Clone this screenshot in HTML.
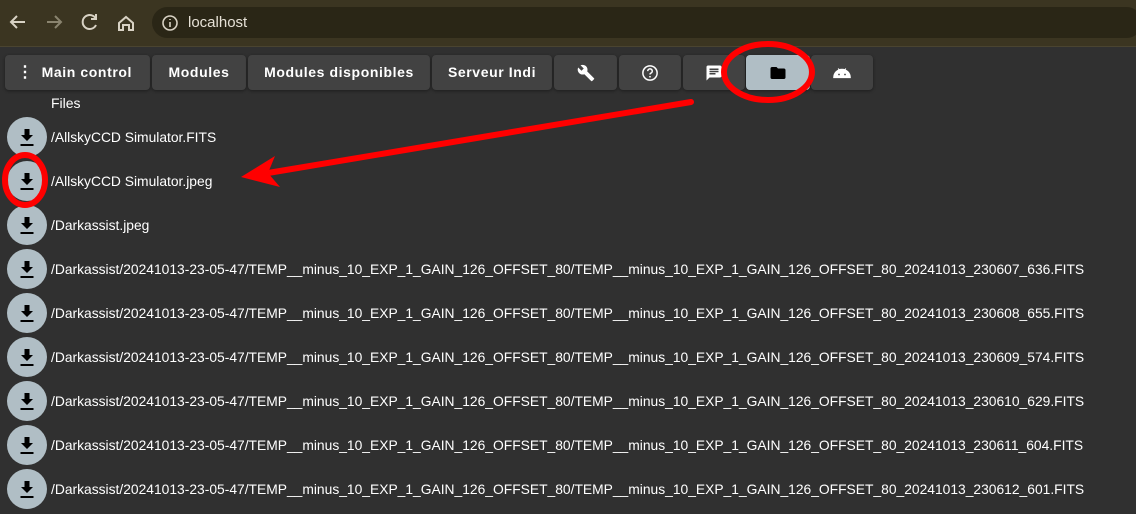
<!DOCTYPE html>
<html><head><style>
body{margin:0;width:1136px;height:514px;overflow:hidden;background:#303030;font-family:"Liberation Sans",Roboto,sans-serif;position:relative}
.bar{position:absolute;left:0;top:0;width:1136px;height:46px;background:#3b3521;border-bottom:1px solid #4a4430}
.url{position:absolute;left:152px;top:7px;width:990px;height:31px;border-radius:16px;background:#2a2616;color:#e6e1d6;font-size:15px;line-height:31px}
.tab{position:absolute;top:55px;height:35px;background:#424242;border-radius:4px;color:#fff;font-size:14px;font-weight:bold;letter-spacing:.6px;line-height:35px;text-align:center;box-shadow:0 1px 3px rgba(0,0,0,.4)}
.row{position:absolute;left:0;height:44px;width:1136px}
.c{position:absolute;left:7px;top:2px;width:40px;height:40px;border-radius:50%;background:#b0bec5}
.t{position:absolute;left:51px;top:0;line-height:44px;color:#fff;font-size:13.84px;white-space:nowrap}
</style></head><body>
<div class="bar">
<svg style="position:absolute;left:0;top:0" width="150" height="46" fill="none" stroke="#d8d2c4" stroke-width="2">
<path d="M25 22H11M17 16l-6 6 6 6"/><path d="M47 22h14M55 16l6 6-6 6" stroke="#8a846f"/>
<path d="M96 19a7 7 0 1 0 0 6M96 14v5h-5"/><path d="M119 23l7-6 7 6v7h-4v-5h-6v5h-4z"/>
</svg>
<div class="url"><svg style="position:absolute;left:9px;top:7px" width="18" height="18" fill="none" stroke="#d8d2c4" stroke-width="1.6"><circle cx="9" cy="9" r="7"/><path d="M9 8v5M9 5v1"/></svg><span style="position:absolute;left:36px">localhost</span></div>
</div>
<div class="tab" style="left:5px;width:145px;text-indent:-6px"><span style="font-size:16px;margin-right:8px">⋮</span>Main control</div>
<div class="tab" style="left:152px;width:94px">Modules</div>
<div class="tab" style="left:248px;width:182px">Modules disponibles</div>
<div class="tab" style="left:432px;width:120px">Serveur Indi</div>
<div class="tab" style="left:554px;width:63px"><svg width="18" height="18" viewBox="0 0 24 24" style="margin-top:9px"><path fill="#fff" d="M22.7 19l-9.1-9.1c.9-2.3.4-5-1.5-6.9-2-2-5-2.4-7.4-1.3L9 6 6 9 1.6 4.7C.4 7.1.9 10.1 2.9 12.1c1.9 1.9 4.6 2.4 6.9 1.5l9.1 9.1c.4.4 1 .4 1.4 0l2.3-2.3c.5-.4.5-1.1.1-1.4z"/></svg></div>
<div class="tab" style="left:619px;width:62px"><svg width="18" height="18" viewBox="0 0 24 24" style="margin-top:9px"><circle cx="12" cy="12" r="9.5" fill="none" stroke="#fff" stroke-width="2"/><path d="M9 9.5a3 3 0 1 1 4 2.8c-.7.3-1 .8-1 1.7" fill="none" stroke="#fff" stroke-width="2"/><circle cx="12" cy="17" r="1.2" fill="#fff"/></svg></div>
<div class="tab" style="left:683px;width:62px"><svg width="18" height="18" viewBox="0 0 24 24" style="margin-top:9px"><path fill="#fff" d="M20 2H4c-1.1 0-2 .9-2 2v18l4-4h14c1.1 0 2-.9 2-2V4c0-1.1-.9-2-2-2zM6 9h12v2H6zm8 5H6v-2h8zm4-6H6V6h12z"/></svg></div>
<div class="tab" style="left:746px;width:64px;background:#b0bec5"><svg width="18" height="18" viewBox="0 0 24 24" style="margin-top:9px"><path fill="#000" d="M10 4H4c-1.1 0-2 .9-2 2v12c0 1.1.9 2 2 2h16c1.1 0 2-.9 2-2V8c0-1.1-.9-2-2-2h-8z"/></svg></div>
<div class="tab" style="left:811px;width:62px"><svg width="18" height="18" viewBox="0 0 24 24" style="margin-top:9px"><path fill="#fff" d="M1 18a11 11 0 0 1 22 0zM7 6l2 3M17 6l-2 3" stroke="#fff" stroke-width="1.5"/><circle cx="8" cy="14" r="1.2" fill="#424242"/><circle cx="16" cy="14" r="1.2" fill="#424242"/></svg></div>
<div style="position:absolute;left:51px;top:95px;color:#fff;font-size:14px">Files</div>
<div style="position:absolute;left:0;top:115px">
<div class="row" style="top:0"><div class="c"></div><div class="t">/AllskyCCD Simulator.FITS</div></div>
<div class="row" style="top:44px"><div class="c"></div><div class="t">/AllskyCCD Simulator.jpeg</div></div>
<div class="row" style="top:88px"><div class="c"></div><div class="t">/Darkassist.jpeg</div></div>
<div class="row" style="top:132px"><div class="c"></div><div class="t">/Darkassist/20241013-23-05-47/TEMP__minus_10_EXP_1_GAIN_126_OFFSET_80/TEMP__minus_10_EXP_1_GAIN_126_OFFSET_80_20241013_230607_636.FITS</div></div>
<div class="row" style="top:176px"><div class="c"></div><div class="t">/Darkassist/20241013-23-05-47/TEMP__minus_10_EXP_1_GAIN_126_OFFSET_80/TEMP__minus_10_EXP_1_GAIN_126_OFFSET_80_20241013_230608_655.FITS</div></div>
<div class="row" style="top:220px"><div class="c"></div><div class="t">/Darkassist/20241013-23-05-47/TEMP__minus_10_EXP_1_GAIN_126_OFFSET_80/TEMP__minus_10_EXP_1_GAIN_126_OFFSET_80_20241013_230609_574.FITS</div></div>
<div class="row" style="top:264px"><div class="c"></div><div class="t">/Darkassist/20241013-23-05-47/TEMP__minus_10_EXP_1_GAIN_126_OFFSET_80/TEMP__minus_10_EXP_1_GAIN_126_OFFSET_80_20241013_230610_629.FITS</div></div>
<div class="row" style="top:308px"><div class="c"></div><div class="t">/Darkassist/20241013-23-05-47/TEMP__minus_10_EXP_1_GAIN_126_OFFSET_80/TEMP__minus_10_EXP_1_GAIN_126_OFFSET_80_20241013_230611_604.FITS</div></div>
<div class="row" style="top:352px"><div class="c"></div><div class="t">/Darkassist/20241013-23-05-47/TEMP__minus_10_EXP_1_GAIN_126_OFFSET_80/TEMP__minus_10_EXP_1_GAIN_126_OFFSET_80_20241013_230612_601.FITS</div></div>
</div>
<svg style="position:absolute;left:0;top:0" width="1136" height="514">
<g fill="#000">
<path id="dl" d="M21 135h12l-6 6z M24.5 129h5v7h-5z M20.5 144h13v2h-13z"/>
<use href="#dl" y="44"/><use href="#dl" y="88"/><use href="#dl" y="132"/><use href="#dl" y="176"/><use href="#dl" y="220"/><use href="#dl" y="264"/><use href="#dl" y="308"/><use href="#dl" y="352"/>
</g>
<g fill="none" stroke="#f00" stroke-width="6" stroke-linecap="round">
<ellipse cx="768" cy="72" rx="44" ry="28"/>
<ellipse cx="25" cy="180" rx="20" ry="25"/>
<path d="M691 102L262 174"/>
</g>
<path d="M241 177L275 156L268 173L280 187Z" fill="#f00"/>
</svg>
</body></html>
